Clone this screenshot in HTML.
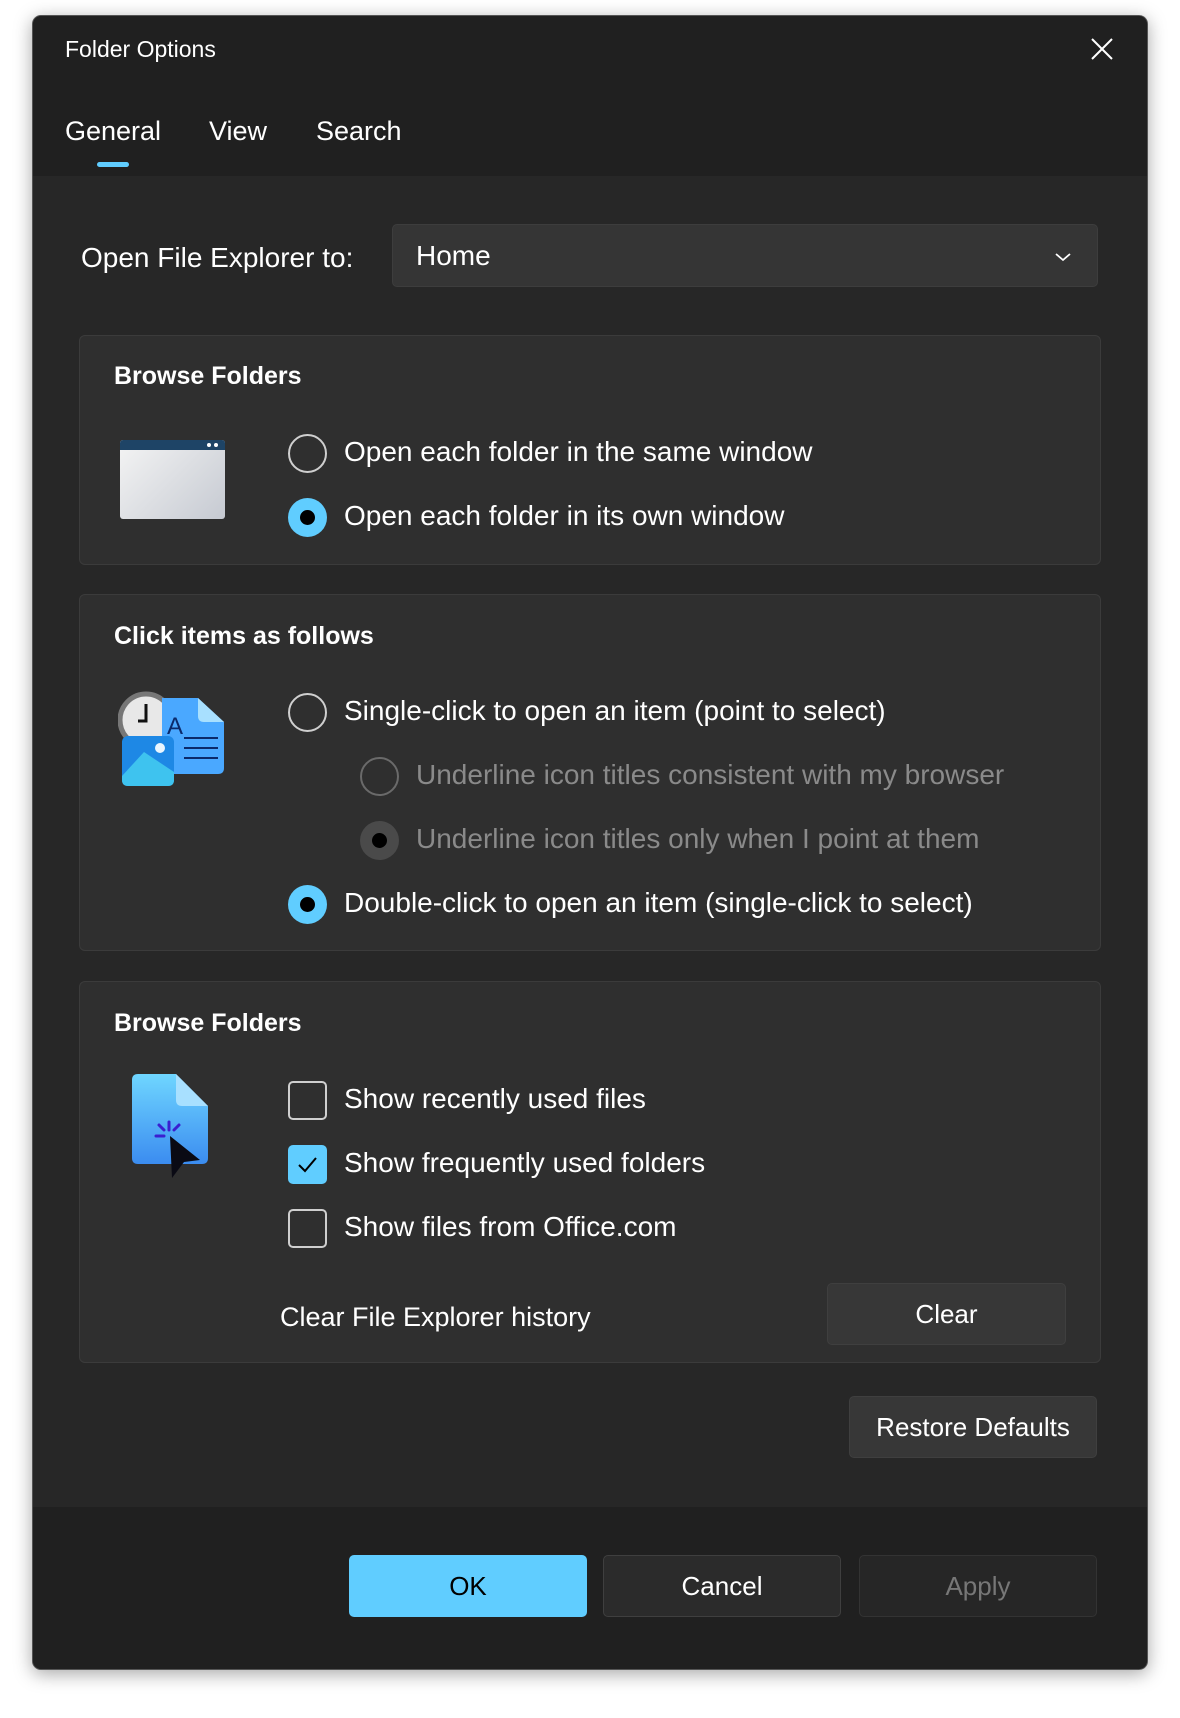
<!DOCTYPE html><html><head><style>
*{box-sizing:border-box;margin:0;padding:0}
body{width:1180px;height:1718px;background:#fff;font-family:"Liberation Sans",sans-serif;color:#fff;position:relative;overflow:hidden}
.win{position:absolute;left:32px;top:15px;width:1116px;height:1655px;background:#272727;border-radius:9px;overflow:hidden;box-shadow:0 4px 18px rgba(0,0,0,.35);border:1px solid #555}
.a{position:absolute;white-space:nowrap}
.hdr{position:absolute;left:0;top:0;width:100%;height:160px;background:#202020}
.ftr{position:absolute;left:0;top:1491px;width:100%;height:164px;background:#202020}
.card{position:absolute;left:46px;width:1022px;background:#2f2f2f;border:1px solid #3b3b3b;border-radius:6px}
.t{font-size:28px;color:#fff}
.h{font-size:25px;font-weight:bold}
.r{position:absolute;width:39px;height:39px;border-radius:50%;border:2px solid #cfcfcf}
.r.on{background:#60cdff;border:none}
.r.on::after{content:"";position:absolute;left:12px;top:12px;width:15px;height:15px;border-radius:50%;background:#000}
.r.dis{border-color:#6a6a6a}
.r.dison{background:#4a4a4a;border:none}
.r.dison::after{content:"";position:absolute;left:12px;top:12px;width:15px;height:15px;border-radius:50%;background:#000}
.cb{position:absolute;width:39px;height:39px;border-radius:5px;border:2px solid #cfcfcf}
.cb.on{background:#60cdff;border:none}
.btn{position:absolute;height:62px;background:#373737;border:1px solid #3f3f3f;border-radius:5px;font-size:26px;display:flex;align-items:center;justify-content:center}
</style></head><body>
<div class="win">
<div class="hdr"></div>
<div class="a" style="left:32px;top:20px;font-size:23px">Folder Options</div>
<svg class="a" style="left:1057px;top:21px" width="24" height="24" viewBox="0 0 24 24"><path d="M2 2L22 22M22 2L2 22" stroke="#fff" stroke-width="2"/></svg>
<div class="a" style="left:32px;top:100px;font-size:27px">General</div>
<div class="a" style="left:176px;top:100px;font-size:27px">View</div>
<div class="a" style="left:283px;top:100px;font-size:27px">Search</div>
<div class="a" style="left:64px;top:146px;width:32px;height:5px;border-radius:3px;background:#60cdff"></div>

<div class="a t" style="left:48px;top:226px">Open File Explorer to:</div>
<div class="a" style="left:359px;top:208px;width:706px;height:63px;background:#353535;border:1px solid #3d3d3d;border-radius:5px"></div>
<div class="a t" style="left:383px;top:224px">Home</div>
<svg class="a" style="left:1021px;top:235px" width="18" height="12" viewBox="0 0 18 12"><path d="M2 3L9 9L16 3" stroke="#fff" stroke-width="1.8" fill="none"/></svg>

<div class="card" style="top:319px;height:230px"></div>
<div class="a h" style="left:81px;top:346px">Browse Folders</div>
<div class="a" style="left:87px;top:424px;width:105px;height:79px;border-radius:3px;background:linear-gradient(135deg,#f4f4f4,#c6cad2);overflow:hidden"><div style="height:10px;background:#1e4466"></div></div>
<div class="a" style="left:174px;top:427px;width:4px;height:4px;border-radius:2px;background:#fff"></div><div class="a" style="left:181px;top:427px;width:4px;height:4px;border-radius:2px;background:#fff"></div>
<div class="r" style="left:255px;top:418px"></div>
<div class="a t" style="left:311px;top:420px">Open each folder in the same window</div>
<div class="r on" style="left:255px;top:482px"></div>
<div class="a t" style="left:311px;top:484px">Open each folder in its own window</div>

<div class="card" style="top:578px;height:357px"></div>
<div class="a h" style="left:81px;top:606px">Click items as follows</div>
<svg class="a" style="left:85px;top:674px" width="110" height="96" viewBox="0 0 110 96">
<circle cx="28" cy="30" r="26" fill="#e8e8e8" stroke="#777" stroke-width="5"/><path d="M28 14V31H20" stroke="#111" stroke-width="3" fill="none"/>
<path d="M44 8H80L106 32V78Q106 84 100 84H50Q44 84 44 78Z" fill="#4aa8ff"/><path d="M80 8V26Q80 32 86 32H106Z" fill="#a8e0ff"/>
<text x="49" y="44" font-family="Liberation Sans" font-size="24" fill="#0b2a6b">A</text>
<path d="M66 48H100M66 58H100M66 68H100" stroke="#0b2a6b" stroke-width="2"/>
<rect x="4" y="46" width="52" height="50" rx="6" fill="#1e88e5"/><path d="M4 86L26 62L56 82V90Q56 96 50 96H10Q4 96 4 90Z" fill="#3ec3ef"/><circle cx="42" cy="58" r="5" fill="#eaf6ff"/>
</svg>
<div class="r" style="left:255px;top:677px"></div>
<div class="a t" style="left:311px;top:679px">Single-click to open an item (point to select)</div>
<div class="r dis" style="left:327px;top:741px"></div>
<div class="a t" style="left:383px;top:743px;color:#8a8a8a">Underline icon titles consistent with my browser</div>
<div class="r dison" style="left:327px;top:805px"></div>
<div class="a t" style="left:383px;top:807px;color:#8a8a8a">Underline icon titles only when I point at them</div>
<div class="r on" style="left:255px;top:869px"></div>
<div class="a t" style="left:311px;top:871px">Double-click to open an item (single-click to select)</div>

<div class="card" style="top:965px;height:382px"></div>
<div class="a h" style="left:81px;top:993px">Browse Folders</div>
<svg class="a" style="left:99px;top:1058px" width="80" height="106" viewBox="0 0 80 106">
<defs><linearGradient id="g" x1="0" y1="0" x2="0" y2="1"><stop offset="0" stop-color="#6fd6ff"/><stop offset="1" stop-color="#3b8cf0"/></linearGradient></defs>
<path d="M6 0H44L76 32V84Q76 90 70 90H6Q0 90 0 84V6Q0 0 6 0Z" fill="url(#g)"/><path d="M44 0V26Q44 32 50 32H76Z" fill="#a8e0ff"/>
<path d="M38 62L68 86L52 88L40 104Z" fill="#0a0a14"/>
<path d="M37 48V56M24 62H32M27 51L32 56M47 51L42 56" stroke="#3a1fd0" stroke-width="3" stroke-linecap="round"/>
</svg>
<div class="cb" style="left:255px;top:1065px"></div>
<div class="a t" style="left:311px;top:1067px">Show recently used files</div>
<div class="cb on" style="left:255px;top:1129px"><svg width="39" height="39" viewBox="0 0 39 39"><path d="M11 20L17 26L28 13" stroke="#000" stroke-width="2" fill="none"/></svg></div>
<div class="a t" style="left:311px;top:1131px">Show frequently used folders</div>
<div class="cb" style="left:255px;top:1193px"></div>
<div class="a t" style="left:311px;top:1195px">Show files from Office.com</div>
<div class="a t" style="left:247px;top:1286px;font-size:27px">Clear File Explorer history</div>
<div class="btn" style="left:794px;top:1267px;width:239px">Clear</div>

<div class="btn" style="left:816px;top:1380px;width:248px">Restore Defaults</div>

<div class="ftr"></div>
<div class="btn" style="left:316px;top:1539px;width:238px;background:#60cdff;border-color:#60cdff;color:#000">OK</div>
<div class="btn" style="left:570px;top:1539px;width:238px;background:#2b2b2b">Cancel</div>
<div class="btn" style="left:826px;top:1539px;width:238px;background:#262626;border-color:#333;color:#777">Apply</div>
</div>
</body></html>
